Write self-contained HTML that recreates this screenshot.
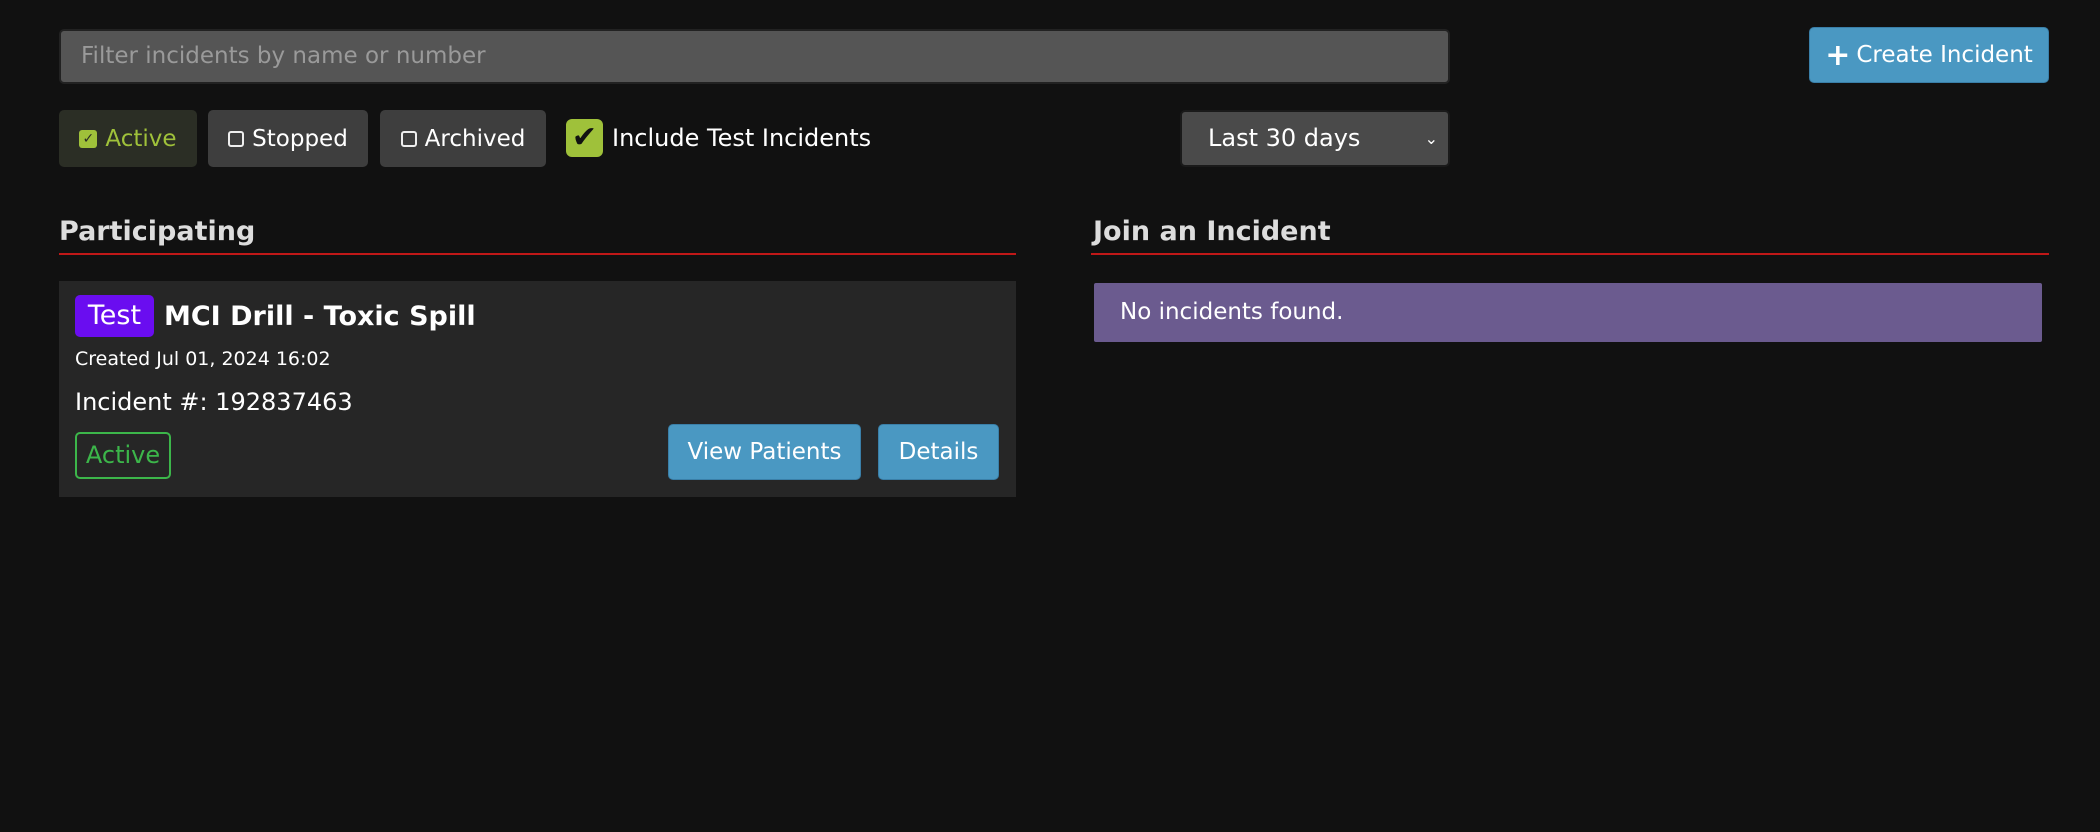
<!DOCTYPE html>
<html><head><meta charset="utf-8"><style>
*{box-sizing:border-box;margin:0;padding:0}
body{width:2100px;height:832px;background:#111;font-family:"DejaVu Sans","Liberation Sans",sans-serif;color:#fff;position:relative;overflow:hidden}
.a{position:absolute}
.input{left:59px;top:29px;width:1391px;height:55px;background:#555;border:2px solid #222;border-radius:5px;color:#9a9a9a;font-size:23px;line-height:51px;padding-left:20px}
.btn{border-radius:5px;display:flex;align-items:center;justify-content:center;font-size:23px}
.blue{background:#4a98c2;border:1px solid #3a7fa8;color:#fff}
.gray{background:#3e3e3e;color:#fff}
.h{font-size:27px;font-weight:bold;color:#ddd}
.line{height:2px;background:#c01818}
.box{display:inline-block;width:16px;height:16px;border:2px solid #eee;border-radius:3px;margin-right:8px}
</style></head><body>
<div class="a input">Filter incidents by name or number</div>
<div class="a btn blue" style="left:1809px;top:27px;width:240px;height:56px;font-size:23px"><b style="font-size:30px;margin-right:6px">+</b>Create Incident</div>

<div class="a btn" style="left:59px;top:110px;width:138px;height:57px;background:#2b2e25;color:#9fc13a"><span style="display:inline-block;width:18px;height:18px;background:#9fc13a;border-radius:3px;margin-right:8px;color:#2b2e25;font-size:14px;line-height:18px;text-align:center;font-weight:bold">✓</span>Active</div>
<div class="a btn gray" style="left:208px;top:110px;width:160px;height:57px"><span class="box"></span>Stopped</div>
<div class="a btn gray" style="left:380px;top:110px;width:166px;height:57px"><span class="box"></span>Archived</div>
<div class="a" style="left:566px;top:119px;width:37px;height:38px;background:#9fc13a;border-radius:6px;color:#111;font-size:30px;line-height:38px;text-align:center;font-weight:bold">✔</div>
<div class="a" style="left:612px;top:120px;font-size:24px;line-height:36px">Include Test Incidents</div>
<div class="a" style="left:1180px;top:110px;width:270px;height:57px;background:#4a4a4a;border:2px solid #1a1a1a;border-radius:5px;font-size:24px;line-height:53px;padding-left:26px">Last 30 days<span style="position:absolute;right:10px;top:0;font-size:16px">&#8964;</span></div>

<div class="a h" style="left:59px;top:216px">Participating</div>
<div class="a line" style="left:59px;top:253px;width:957px"></div>
<div class="a h" style="left:1093px;top:216px">Join an Incident</div>
<div class="a line" style="left:1091px;top:253px;width:958px"></div>

<div class="a" style="left:59px;top:281px;width:957px;height:216px;background:#262626"></div>
<div class="a" style="left:75px;top:295px;width:79px;height:42px;background:#6a0df0;border-radius:5px;font-size:27px;line-height:42px;text-align:center">Test</div>
<div class="a" style="left:164px;top:297px;font-size:27px;font-weight:bold;line-height:40px">MCI Drill - Toxic Spill</div>
<div class="a" style="left:75px;top:348px;font-size:19px">Created Jul 01, 2024 16:02</div>
<div class="a" style="left:75px;top:388px;font-size:24px">Incident #: 192837463</div>
<div class="a" style="left:75px;top:432px;width:96px;height:47px;border:2px solid #3cb64a;border-radius:5px;color:#3cb64a;font-size:24px;line-height:43px;text-align:center">Active</div>
<div class="a btn blue" style="left:668px;top:424px;width:193px;height:56px">View Patients</div>
<div class="a btn blue" style="left:878px;top:424px;width:121px;height:56px">Details</div>

<div class="a" style="left:1094px;top:283px;width:948px;height:59px;background:#6b5b8f;border-radius:2px;font-size:23px;line-height:59px;padding-left:26px">No incidents found.</div>
</body></html>
